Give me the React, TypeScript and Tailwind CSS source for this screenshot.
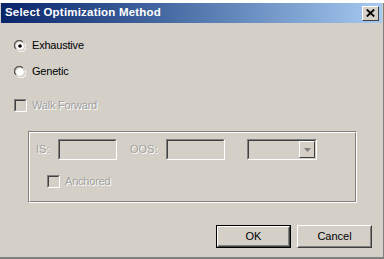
import React from "react";

const font = { fontFamily: '"Liberation Sans", Arial, sans-serif' };

function Radio({ checked }: { checked?: boolean }) {
  return (
    <svg width="12" height="12" viewBox="0 0 12 12" className="shrink-0">
      <path d="M1 8 A5 5 0 0 1 8 1" stroke="#808080" fill="none" />
      <path d="M2 9 A4.2 4.2 0 0 1 9 2" stroke="#404040" fill="none" />
      <path d="M10 3 A4.3 4.3 0 0 1 3 10" stroke="#d4d0c8" fill="none" />
      <path d="M11 4 A5 5 0 0 1 4 11" stroke="#ffffff" fill="none" />
      <circle cx="6" cy="6" r="3.8" fill="#ffffff" />
      {checked && <circle cx="6" cy="6" r="1.8" fill="#000" />}
    </svg>
  );
}

function Check() {
  return (
    <div className="w-[13px] h-[13px] shrink-0 border border-t-[#808080] border-l-[#808080] border-b-white border-r-white">
      <div className="w-full h-full border border-t-[#404040] border-l-[#404040] border-b-[#d4d0c8] border-r-[#d4d0c8] bg-[#d4d0c8]" />
    </div>
  );
}

function Field({ w }: { w: string }) {
  return (
    <div className={`${w} h-[21px] border border-t-[#808080] border-l-[#808080] border-b-white border-r-white`}>
      <div className="w-full h-full border border-t-[#404040] border-l-[#404040] border-b-[#d4d0c8] border-r-[#d4d0c8] bg-[#d4d0c8]" />
    </div>
  );
}

function Button({ label, def }: { label: string; def?: boolean }) {
  return (
    <div className={`w-[75px] h-[23px] ${def ? "border border-black" : ""}`}>
      <div className="w-full h-full border border-t-white border-l-white border-b-[#404040] border-r-[#404040]">
        <div className="w-full h-full border border-t-[#d4d0c8] border-l-[#d4d0c8] border-b-[#808080] border-r-[#808080] flex items-center justify-center text-[11px] text-black">
          {label}
        </div>
      </div>
    </div>
  );
}

export default function App() {
  return (
    <div className="w-[384px] h-[259px] bg-white flex flex-col overflow-hidden" style={font}>
      <div className="h-[3px] shrink-0" />
      <div className="flex-1 flex flex-col bg-[#d4d0c8] border-b-2 border-b-[#808080] border-r border-r-[#808080]">
        <div className="h-[20px] mx-[1px] flex items-center justify-between pl-[4px] pr-[3px] bg-gradient-to-r from-[#0a246a] to-[#a6caf0]">
          <span className="text-white font-bold text-[11.5px] tracking-[0.2px]">
            Select Optimization Method
          </span>
          <div className="w-[17px] h-[15px] border border-t-white border-l-white border-b-[#404040] border-r-[#404040] bg-[#d4d0c8] flex items-center justify-center">
            <svg width="9" height="8" viewBox="0 0 9 8">
              <path d="M0.8 0.5 L8.2 7.5 M8.2 0.5 L0.8 7.5" stroke="#000" strokeWidth="1.8" />
            </svg>
          </div>
        </div>
        <div className="flex-1 flex flex-col pl-[14px] pt-[16px] text-[11px]">
          <div className="flex items-center gap-[6px] h-[13px]">
            <Radio checked />
            <span className="text-black tracking-[-0.2px]">Exhaustive</span>
          </div>
          <div className="flex items-center gap-[6px] h-[13px] mt-[13px]">
            <Radio />
            <span className="text-black tracking-[-0.2px]">Genetic</span>
          </div>
          <div className="flex items-center gap-[5px] h-[13px] mt-[21px]">
            <Check />
            <span className="text-[#a0a0a0] tracking-[-0.2px] [text-shadow:1px_1px_0_#fff]">Walk Forward</span>
          </div>
          <div className="ml-[14px] mt-[19px] w-[329px] h-[72px] border border-t-[#808080] border-l-[#808080] border-b-white border-r-white">
            <div className="w-full h-full border border-t-white border-l-white border-b-[#808080] border-r-[#808080] flex flex-col pl-[6px] pt-[6px]">
              <div className="flex items-center text-[#a0a0a0] [text-shadow:1px_1px_0_#fff]">
                <span className="w-[22px]">IS:</span>
                <Field w="w-[59px]" />
                <span className="ml-[13px] w-[36px]">OOS:</span>
                <Field w="w-[59px]" />
                <div className="ml-[22px] w-[70px] h-[21px] border border-t-[#808080] border-l-[#808080] border-b-white border-r-white">
                  <div className="w-full h-full border border-t-[#404040] border-l-[#404040] border-b-[#d4d0c8] border-r-[#d4d0c8] bg-[#d4d0c8] flex justify-end">
                    <div className="w-[16px] h-full border border-t-white border-l-white border-b-[#404040] border-r-[#404040] flex items-center justify-center">
                      <svg width="7" height="4" viewBox="0 0 7 4">
                        <path d="M0 0 H7 L3.5 4 Z" fill="#808080" />
                      </svg>
                    </div>
                  </div>
                </div>
              </div>
              <div className="flex items-center gap-[5px] ml-[11px] mt-[13px]">
                <Check />
                <span className="text-[#a0a0a0] tracking-[-0.2px] [text-shadow:1px_1px_0_#fff]">Anchored</span>
              </div>
            </div>
          </div>
          <div className="flex justify-end gap-[6px] pr-[11px] mt-[22px]">
            <Button label="OK" def />
            <Button label="Cancel" />
          </div>
        </div>
      </div>
    </div>
  );
}
